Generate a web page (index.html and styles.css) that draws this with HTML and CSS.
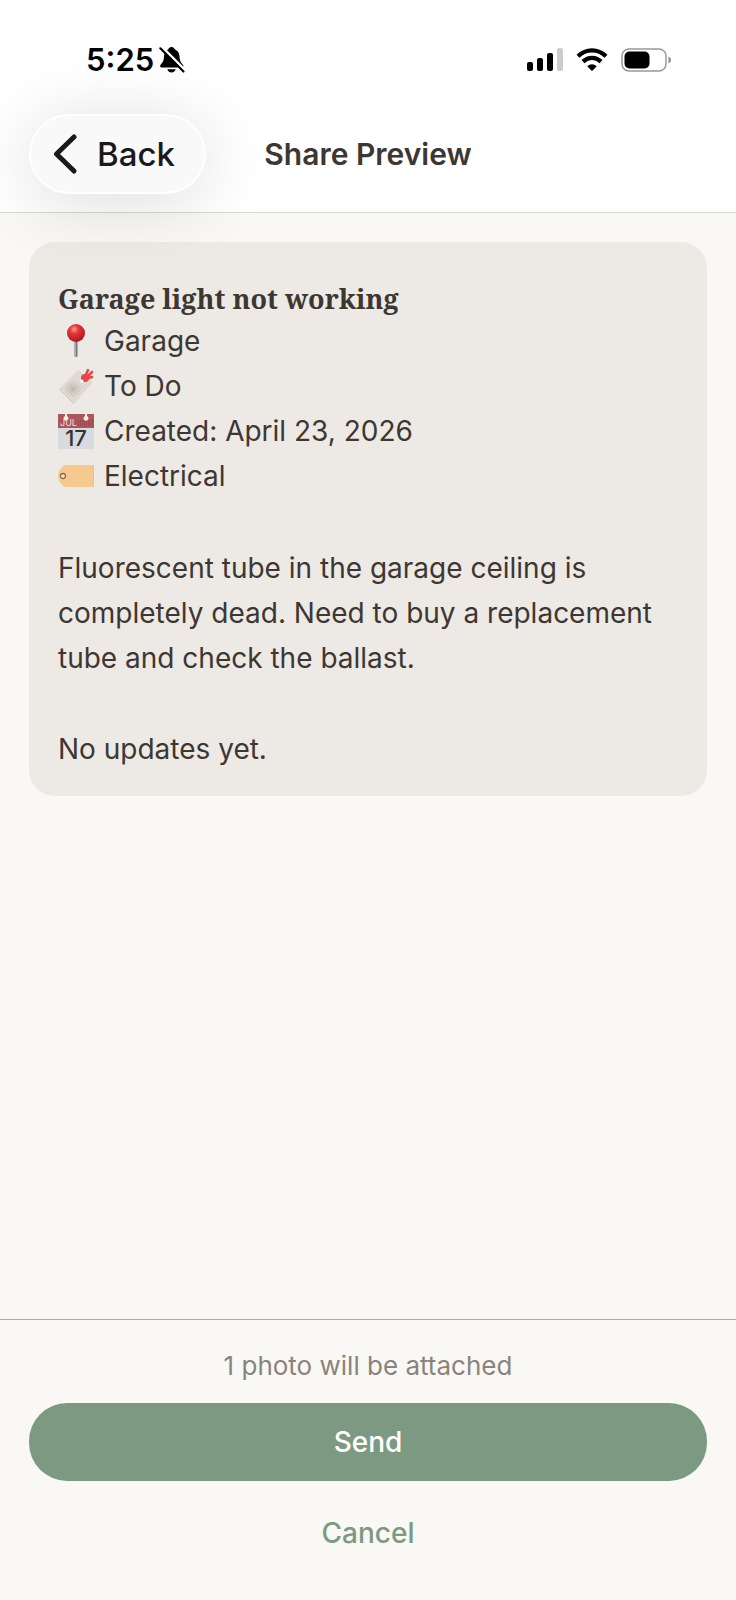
FILE: index.html
```html
<!DOCTYPE html>
<html lang="en">
<head>
<meta charset="utf-8">
<meta name="viewport" content="width=device-width, initial-scale=1">
<title>Share Preview</title>
<link rel="stylesheet" href="styles.css">
</head>
<body>
<div class="screen">
  <header class="header">
    <div class="status">
      <div class="status-left">
        <span class="time">5:25</span>
        <svg class="bell" width="26" height="28" viewBox="0 0 26 28" aria-label="Silent mode">
          <path d="M12.500 1.000c1.800 0 2.900 1.100 3.200 2.300 3 1.200 4.600 3.800 4.800 7 .2 4.500 1.200 6.200 3.400 8.400.9 1 .6 2.800-1.100 2.800H2.700c-1.700 0-2-1.800-1.100-2.800 2.200-2.200 3.200-3.900 3.400-8.400.2-3.200 1.500-5.800 4.300-7C9.600 2.100 10.700 1 12.500 1z"/>
          <path d="M8.300 23.300h8.400c-.5 2-2 3.200-4.200 3.200s-3.700-1.200-4.200-3.200z"/>
          <path d="M2.800.800 26 24" stroke="#fff" stroke-width="2.600"/>
          <path d="M1.300 2.300 24.500 25.600" stroke="#000" stroke-width="2.100" stroke-linecap="round"/>
        </svg>
      </div>
      <div class="status-right">
        <svg width="36" height="24" viewBox="0 0 36 24" aria-label="Signal">
          <rect x="0" y="14" width="6" height="9" rx="2"/>
          <rect x="10" y="10" width="6" height="13" rx="2"/>
          <rect x="20" y="5" width="6" height="18" rx="2"/>
          <rect x="30" y="0" width="6" height="23" rx="2" fill="#ccc"/>
        </svg>
        <svg width="32" height="24" viewBox="0 0 32 24" aria-label="Wi-Fi">
          <g fill="none" stroke="#000" stroke-width="4.200">
            <path d="M2 8.300Q8 2.400 16 2.400T30 8.300"/>
            <path d="M7 13.600Q11 9.900 16 9.900T25 13.600"/>
          </g>
          <path d="M11.300 18.300Q13.300 16.300 16 16.300T20.700 18.300L16.700 22.500Q16 23.100 15.300 22.500z"/>
        </svg>
        <svg width="51" height="24" viewBox="0 0 51 24" aria-label="Battery">
          <rect x="1" y="1" width="44" height="22" rx="7" fill="none" stroke="#999" stroke-width="1.500"/>
          <rect x="3.500" y="3.500" width="25" height="17" rx="5"/>
          <path d="M47.500 8.500q2.500 1 2.500 3.500t-2.500 3.500z" fill="#888"/>
        </svg>
      </div>
    </div>
    <div class="nav">
      <button class="back" type="button">
        <svg width="24" height="40" viewBox="0 0 24 40" aria-hidden="true"><path d="M21 3 3.500 20 21 37" fill="none" stroke="#1a1a1a" stroke-width="5" stroke-linecap="round" stroke-linejoin="round"/></svg>
        <span>Back</span>
      </button>
      <h1 class="title">Share Preview</h1>
    </div>
  </header>
  <main class="content">
    <article class="card">
      <h2 class="card-title">Garage light not working</h2>
      <ul class="facts">
        <li>
          <svg class="emoji" viewBox="0 0 36 36" aria-hidden="true">
            <defs><radialGradient id="pin" cx=".4" cy=".3" r=".7"><stop offset="0" stop-color="#ff9a90"/><stop offset=".35" stop-color="#e3373a"/><stop offset="1" stop-color="#ae1520"/></radialGradient></defs>
            <rect x="16.500" y="15" width="3" height="18" rx="1" fill="#777"/><path d="M17.500 16v17" stroke="#aaa"/>
            <circle cx="18" cy="9" r="9" fill="url(#pin)"/>
          </svg>Garage</li>
        <li>
          <svg class="emoji" viewBox="0 0 36 36" aria-hidden="true">
            <path d="M20 1 33 12 34 14 16 35 1 20z" fill="#dfd9d2"/><path d="M1 20 16 35" stroke="#d0c9c0"/>
            <path d="M15 12v16M7 20h16M9.500 14.500l11 11M20.500 14.500l-11 11M12 13l6 14M18 13l-6 14M8 17l14 6M22 17 8 23" stroke="#beb7ae" stroke-width=".8"/>
            <circle cx="27" cy="9" r="4" fill="#e6454b"/><path d="M27 8 30 1M28 9l6-6M27 10l7-2" stroke="#e6454b" stroke-width="2.500" stroke-linecap="round"/><circle cx="24" cy="12" r="1.500" fill="#fff"/>
          </svg>To Do</li>
        <li>
          <svg class="emoji" viewBox="0 0 36 36" aria-hidden="true">
            <path d="M0 0h36v35H0z" fill="#d7dade"/><path d="M0 0h36v14H0z" fill="#ac555a"/>
            <path d="M20 7h15M20 9h15M20 11h15" stroke="#8d4248" stroke-dasharray="1 1"/>
            <path d="M7 0h2v2a2.500 2.500 0 1 1-2 0zM27 0h2v2a2.500 2.500 0 1 1-2 0z" fill="#f3eceb"/>
            <text x="2" y="12" class="cal-month">JUL</text><text x="18" y="32" text-anchor="middle" class="cal-day">17</text>
          </svg>Created: April 23, 2026</li>
        <li>
          <svg class="emoji" viewBox="0 0 36 36" aria-hidden="true">
            <path d="M7 6h29v22H7Q0 24 0 17T7 6z" fill="#f5c990"/><path d="M36 6v22" stroke="#e5b97d"/><circle cx="5" cy="17" r="2.500" fill="#ede9e4" stroke="#9a6540" stroke-width="1.300"/>
          </svg>Electrical</li>
      </ul>
      <p class="text">Fluorescent tube in the garage ceiling is completely dead. Need to buy a replacement tube and check the ballast.</p>
      <p class="text">No updates yet.</p>
    </article>
  </main>
  <footer class="footer">
    <p class="note">1 photo will be attached</p>
    <button class="send" type="button">Send</button>
    <button class="cancel" type="button">Cancel</button>
  </footer>
</div>
</body>
</html>
```
FILE: styles.css
```css
* { box-sizing: border-box; }
body {
  margin: 0;
  background: #f9f8f4;
  color: #3d3733;
  font-family: Inter, "Liberation Sans", sans-serif;
}
h1, h2, p, ul { margin: 0; padding: 0; }
button { border: 0; background: none; padding: 0; font: inherit; cursor: pointer; }
.screen { min-height: 100vh; display: flex; flex-direction: column; }
.header { background: #fff; border-bottom: 1px solid #d6d5d3; padding-top: 40px; }
.status {
  display: flex; justify-content: space-between; align-items: center;
  height: 40px; padding: 0 64px 0 86px; color: #000;
}
.status-left { display: flex; align-items: center; gap: 5px; }
.status-right { display: flex; align-items: center; gap: 13px; }
.time { font-size: 31px; font-weight: 600; line-height: 40px; }
.nav {
  display: grid; grid-template-columns: 1fr auto 1fr; align-items: center;
  padding: 34px 29px 18px;
}
.back {
  position: relative; z-index: 1; justify-self: start;
  display: flex; align-items: center; gap: 20px;
  height: 80px; padding: 0 29px 0 22px;
  border: 2px solid #fff; border-radius: 40px;
  background: #f9f9f9; color: #1a1a1a; font-size: 33px; font-weight: 500;
  box-shadow: 0 8px 70px rgba(0, 0, 0, .14);
}
.title { font-size: 30px; font-weight: 600; line-height: 40px; }
.content { flex: 1; padding: 29px; }
.card { background: #ede9e4; border-radius: 26px; padding: 36px 29px 24px; }
.card-title { font-family: "Noto Serif", "Liberation Serif", serif; font-size: 27px; line-height: 41px; }
.facts { list-style: none; margin-bottom: 47px; }
.facts li { display: flex; align-items: center; gap: 10px; font-size: 28px; line-height: 45px; }
.emoji { width: 36px; height: 36px; flex: none; }
.cal-month { font-size: 9px; fill: #f3dcdc; }
.cal-day { font-size: 22px; font-weight: 500; fill: #333; }
.text { font-size: 28px; line-height: 45px; }
.text + .text { margin-top: 46px; }
.footer {
  border-top: 1px solid #aeaca9; padding: 26px 29px 28px;
  display: flex; flex-direction: column; align-items: stretch;
}
.note { text-align: center; font-size: 26px; line-height: 40px; color: #8a837d; margin-bottom: 17px; }
.send { height: 78px; border-radius: 38px; background: #7c9a82; color: #fff; font-size: 28px; font-weight: 500; }
.cancel { height: 78px; margin-top: 13px; color: #7c9a82; font-size: 28px; font-weight: 500; }
```
